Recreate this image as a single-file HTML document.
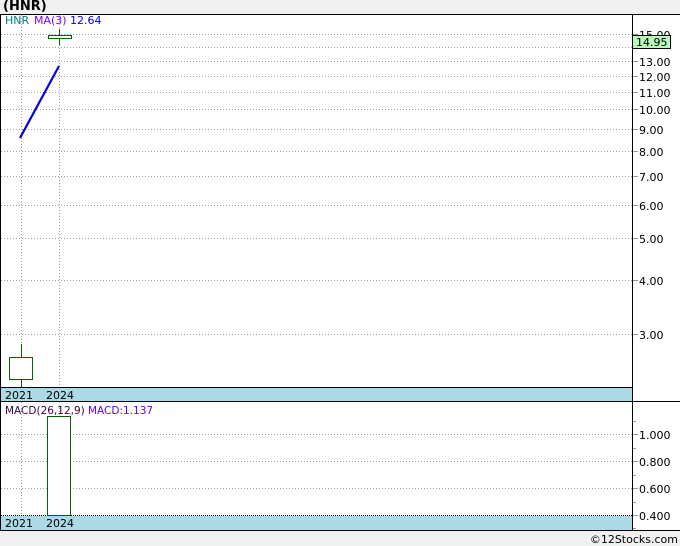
<!DOCTYPE html>
<html><head><style>
body{margin:0;width:680px;height:546px;background:#f0f0f0;font-family:Verdana,"DejaVu Sans",sans-serif;overflow:hidden;position:relative}
.t{position:absolute;font-size:11px;white-space:nowrap}
</style></head><body>
<div class="t" style="left:3px;top:-1px;font-size:13px;font-weight:bold;font-family:'DejaVu Sans',sans-serif">(HNR)</div>
<svg width="680" height="546" style="position:absolute;left:0;top:0" font-family="DejaVu Sans, Verdana, sans-serif" font-size="11">
<rect x="0" y="14" width="680" height="517" fill="#fff"/>
<g stroke="#a0a0a0" stroke-dasharray="1,2" stroke-width="1">
<line x1="1" x2="632" y1="34.5" y2="34.5"/><line x1="1" x2="632" y1="47.5" y2="47.5"/>
<line x1="1" x2="632" y1="61.5" y2="61.5"/><line x1="1" x2="632" y1="76.5" y2="76.5"/>
<line x1="1" x2="632" y1="92.5" y2="92.5"/><line x1="1" x2="632" y1="109.5" y2="109.5"/>
<line x1="1" x2="632" y1="129.5" y2="129.5"/><line x1="1" x2="632" y1="151.5" y2="151.5"/>
<line x1="1" x2="632" y1="176.5" y2="176.5"/><line x1="1" x2="632" y1="205.5" y2="205.5"/>
<line x1="1" x2="632" y1="238.5" y2="238.5"/><line x1="1" x2="632" y1="280.5" y2="280.5"/>
<line x1="1" x2="632" y1="334.5" y2="334.5"/>
<line x1="1" x2="632" y1="434.5" y2="434.5"/><line x1="1" x2="632" y1="461.5" y2="461.5"/>
<line x1="1" x2="632" y1="488.5" y2="488.5"/>
<line x1="21.5" x2="21.5" y1="15" y2="530"/><line x1="59.5" x2="59.5" y1="15" y2="530"/>
</g>
<g stroke="#999"><line x1="632" x2="638" y1="34.5" y2="34.5"/><line x1="632" x2="638" y1="61.5" y2="61.5"/><line x1="632" x2="638" y1="76.5" y2="76.5"/><line x1="632" x2="638" y1="92.5" y2="92.5"/><line x1="632" x2="638" y1="109.5" y2="109.5"/><line x1="632" x2="638" y1="129.5" y2="129.5"/><line x1="632" x2="638" y1="151.5" y2="151.5"/><line x1="632" x2="638" y1="176.5" y2="176.5"/><line x1="632" x2="638" y1="205.5" y2="205.5"/><line x1="632" x2="638" y1="238.5" y2="238.5"/><line x1="632" x2="638" y1="280.5" y2="280.5"/><line x1="632" x2="638" y1="334.5" y2="334.5"/>
<line x1="632" x2="638" y1="434.5" y2="434.5"/><line x1="632" x2="638" y1="461.5" y2="461.5"/><line x1="632" x2="638" y1="488.5" y2="488.5"/><line x1="632" x2="638" y1="515.5" y2="515.5"/>
<line x1="632" x2="636" y1="421.5" y2="421.5"/><line x1="632" x2="636" y1="448.5" y2="448.5"/><line x1="632" x2="636" y1="475.5" y2="475.5"/><line x1="632" x2="636" y1="502.5" y2="502.5"/><line x1="632" x2="636" y1="528.5" y2="528.5"/></g>
<rect x="1" y="388" width="631" height="13" fill="#add8e6"/>
<rect x="1" y="516" width="631" height="14" fill="#add8e6"/>
<line x1="1" x2="632" y1="515.5" y2="515.5" stroke="#000" stroke-dasharray="1,1"/>
<g stroke="#000" stroke-width="1" fill="none">
<line x1="0" x2="680" y1="14.5" y2="14.5"/><line x1="0.5" x2="0.5" y1="14" y2="531"/>
<line x1="0" x2="680" y1="530.5" y2="530.5"/><line x1="632.5" x2="632.5" y1="14" y2="531"/>
<line x1="0" x2="632" y1="387.5" y2="387.5"/><line x1="0" x2="680" y1="401.5" y2="401.5"/>
</g>
<g stroke="#006400" fill="none">
<line x1="21.5" x2="21.5" y1="344" y2="388"/><rect x="9.5" y="357.5" width="23" height="22" fill="#fff"/>
<line x1="59.5" x2="59.5" y1="29" y2="45"/><rect x="48.5" y="35.5" width="23" height="3" fill="#fff"/>
<rect x="47.5" y="416.5" width="23" height="99" fill="#fff"/>
</g>
<line x1="20" y1="138" x2="59" y2="66" stroke="#0000e0" stroke-width="2.2"/>
<text x="5" y="24" fill="#008080">HNR</text><text x="34" y="24" fill="#8000ff">MA(3)</text><text x="70" y="24" fill="#0000e0">12.64</text>
<text x="5" y="414" fill="#400040" font-size="10.5">MACD(26,12,9)</text><text x="88" y="414" fill="#6000ff" font-size="10.5">MACD:1.137</text>
<text x="5" y="399" fill="#000">2021</text><text x="46" y="399" fill="#000">2024</text>
<text x="5" y="527" fill="#000">2021</text><text x="46" y="527" fill="#000">2024</text>
<g fill="#000">
<text x="639" y="39">15.00</text><text x="639" y="66">13.00</text><text x="639" y="81">12.00</text><text x="639" y="97">11.00</text><text x="639" y="114">10.00</text><text x="639" y="134">9.00</text><text x="639" y="156">8.00</text><text x="639" y="181">7.00</text><text x="639" y="210">6.00</text><text x="639" y="243">5.00</text><text x="639" y="285">4.00</text><text x="639" y="339">3.00</text>
<text x="639" y="439">1.000</text><text x="639" y="466">0.800</text><text x="639" y="493">0.600</text><text x="639" y="520">0.400</text>
</g>
<rect x="632.5" y="35.5" width="38" height="13" fill="#b8f8b8" stroke="#000"/>
<text x="636" y="46" fill="#000">14.95</text>
<text x="678" y="543" fill="#000" font-size="11" text-anchor="end">©12Stocks.com</text>
</svg>
</body></html>
